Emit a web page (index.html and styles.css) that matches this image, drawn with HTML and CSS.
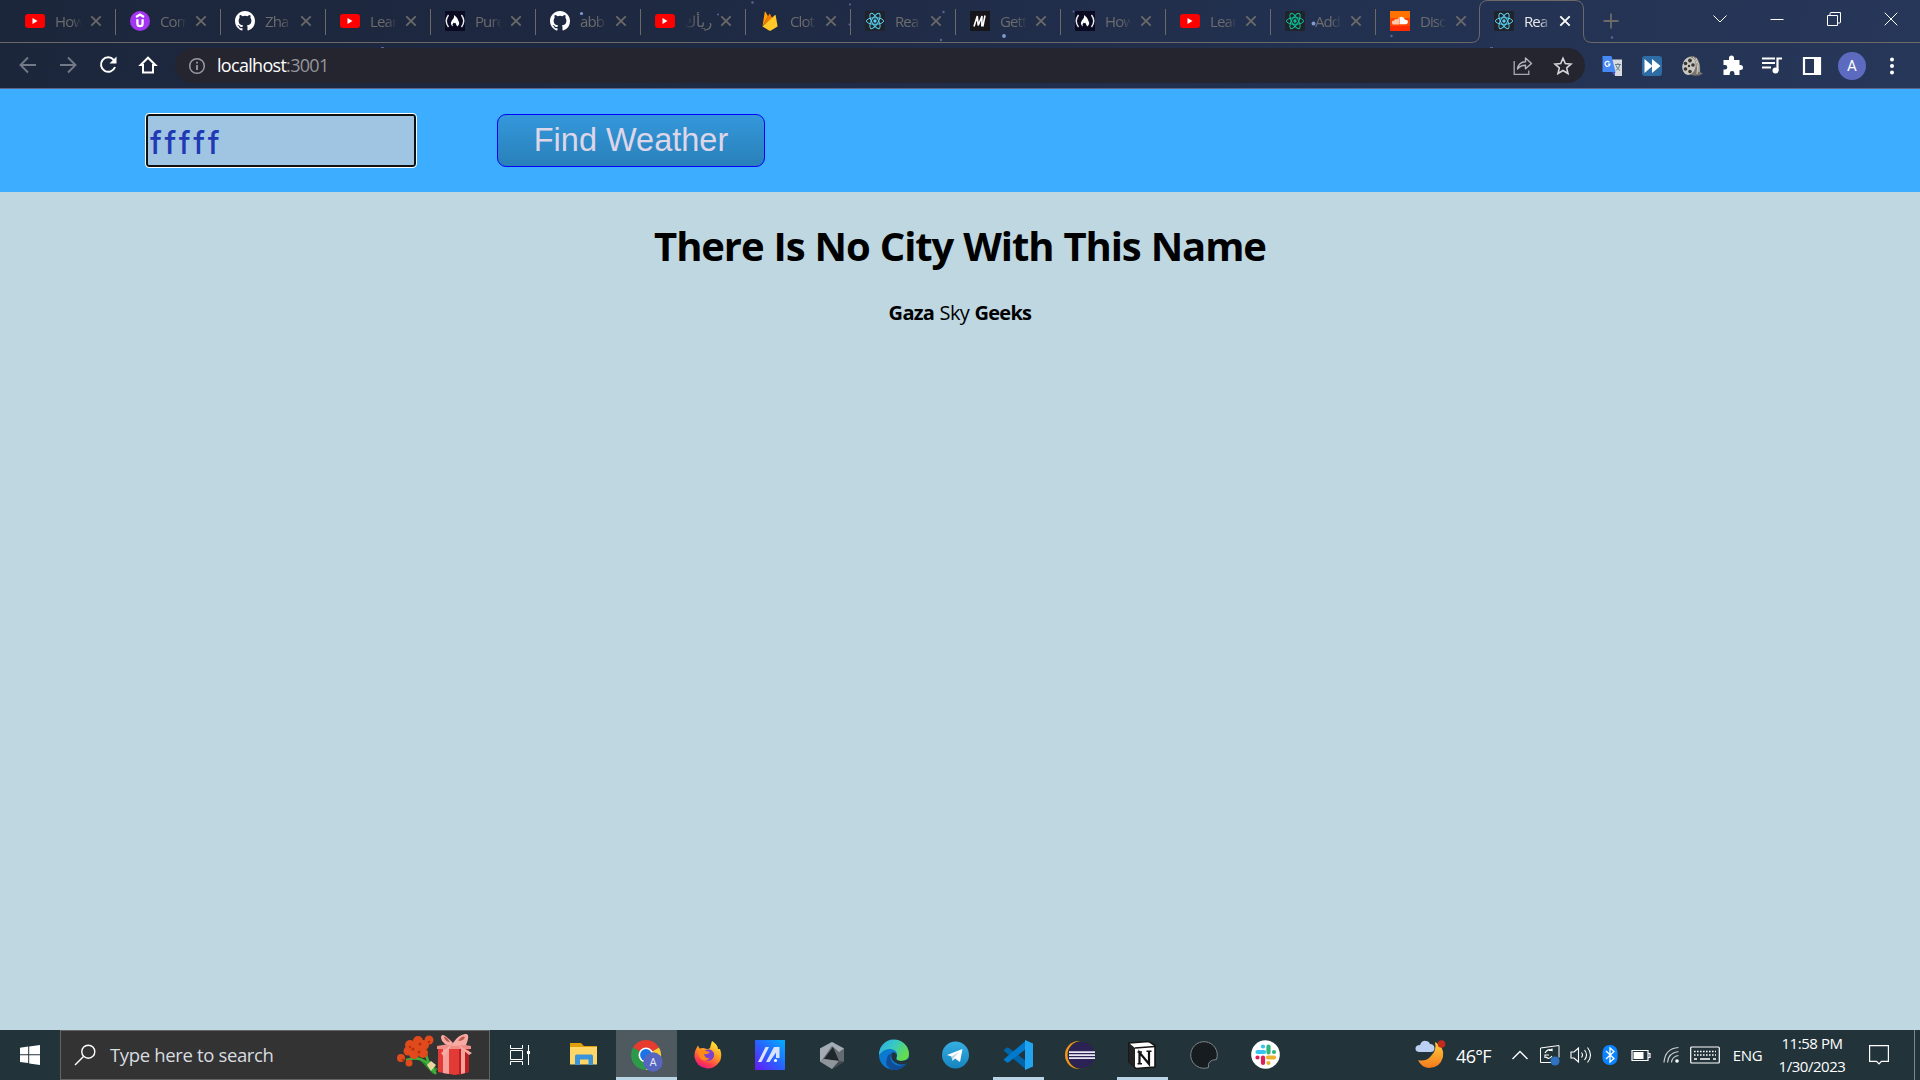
FILE: index.html
```html
<!DOCTYPE html>
<html lang="en">
<head>
<meta charset="utf-8">
<title>React App</title>
<link rel="stylesheet" href="styles.css">
</head>
<body>
<svg class="defs" aria-hidden="true">
  <defs>
    <symbol id="youtube" viewBox="0 0 20 20"><rect y="3" width="20" height="14" rx="3" fill="#f00"/><path d="M7.500 7v6l5-3z" fill="#fff"/></symbol>
    <symbol id="github" viewBox="0 0 16 16"><path fill="#fff" d="M8 0C3.58 0 0 3.58 0 8c0 3.54 2.29 6.53 5.47 7.59.4.07.55-.17.55-.38 0-.19-.01-.82-.01-1.49-2.01.37-2.53-.49-2.69-.94-.09-.23-.48-.94-.82-1.13-.28-.15-.68-.52-.01-.53.63-.01 1.08.58 1.23.82.72 1.21 1.87.87 2.33.66.07-.52.28-.87.51-1.07-1.78-.2-3.64-.89-3.64-3.95 0-.87.31-1.59.82-2.15-.08-.2-.36-1.02.08-2.12 0 0 .67-.21 2.2.82a7.6 7.6 0 0 1 4 0c1.53-1.04 2.2-.82 2.2-.82.44 1.1.16 1.92.08 2.12.51.56.82 1.27.82 2.15 0 3.07-1.87 3.75-3.65 3.95.29.25.54.73.54 1.48 0 1.07-.01 1.93-.01 2.2 0 .21.15.46.55.38A8.01 8.01 0 0 0 16 8c0-4.42-3.58-8-8-8z"/></symbol>
    <symbol id="udemy" viewBox="0 0 20 20"><circle cx="10" cy="10" r="10" fill="#a435f0"/><path d="M6 6l4-2.400L14 6M7.400 8.200v4.300q0 2.700 2.600 2.700t2.600-2.700V8.200" fill="none" stroke="#fff" stroke-width="2.300"/></symbol>
    <symbol id="fcc" viewBox="0 0 20 20"><path fill="#0a0a23" d="M0 0h20v20H0z"/><path d="M3.500 4Q-1 10 3.500 16M16.500 4Q21 10 16.500 16" fill="none" stroke="#eee" stroke-width="1.400"/><path d="M9.300 4q.2 3-2.400 5.500Q4.500 13 7.800 15.500q-1-2.500 1-4 .4 1.400 1.600.3.800 2.200 1.800 3.700 3.200-2.300 1.300-5.500Q12 6 9.300 4z" fill="#fff"/></symbol>
    <symbol id="firebase" viewBox="0 0 20 20"><path d="M2.500 15.500L4.700 1q.3-.9.900 0l2.400 4.300z" fill="#ffa000"/><path d="M2.500 15.500L9.200 3.100q.5-.7.900 0l2 3.900z" fill="#f57c00"/><path d="M2.500 15.500L14.700 4.200q.8-.5 1 .4L17.600 15.500l-6.600 4q-1 .5-2 0z" fill="#ffca28"/></symbol>
    <symbol id="react" viewBox="0 0 20 20"><rect width="20" height="20" rx="1.500" fill="#20232a"/><circle cx="10" cy="10" r="1.700" fill="currentColor"/><g fill="none" stroke="currentColor" stroke-width="1"><ellipse cx="10" cy="10" rx="8.600" ry="3.300"/><ellipse cx="10" cy="10" rx="8.600" ry="3.300" transform="rotate(60 10 10)"/><ellipse cx="10" cy="10" rx="8.600" ry="3.300" transform="rotate(120 10 10)"/></g></symbol>
    <symbol id="mui" viewBox="0 0 20 20"><path fill="#15151a" d="M0 0h20v20H0z"/><path d="M4 15.500L7.300 5l.9 9.500L12 5l-.2 10.500M12.800 15.500L15 4.500" fill="none" stroke="#fff" stroke-width="1.600"/></symbol>
    <symbol id="soundcloud" viewBox="0 0 20 20"><path fill="#ff4500" d="M0 0h20v20H0z"/><path fill="#ff7200" d="M0 0h20v7H0z"/><path fill="#ff2a00" d="M0 15h20v5H0z"/><path d="M2 12.500v-2l1-1 1 .5 1-2 2 .5 2-2v7H3z" fill="#ffc9aa"/><path d="M9.500 6.200q4-1.500 5.500 2.500 3-.2 3 2.300-.2 2.300-2.500 2.300h-6z" fill="#fff"/></symbol>
    <symbol id="x" viewBox="0 0 12 12"><path d="M1.300 1.300l9.400 9.400m0-9.400l-9.400 9.400" fill="none" stroke="currentColor" stroke-width="1.800"/></symbol>
  </defs>
</svg>

<div class="browser">
  <div class="tabstrip">
    <div class="tab"><svg class="favicon"><use href="#youtube"/></svg><span class="title">How</span><svg class="close"><use href="#x"/></svg></div>
    <div class="tab"><svg class="favicon"><use href="#udemy"/></svg><span class="title">Com</span><svg class="close"><use href="#x"/></svg></div>
    <div class="tab"><svg class="favicon"><use href="#github"/></svg><span class="title">Zha</span><svg class="close"><use href="#x"/></svg></div>
    <div class="tab"><svg class="favicon"><use href="#youtube"/></svg><span class="title">Lear</span><svg class="close"><use href="#x"/></svg></div>
    <div class="tab"><svg class="favicon"><use href="#fcc"/></svg><span class="title">Pure</span><svg class="close"><use href="#x"/></svg></div>
    <div class="tab"><svg class="favicon"><use href="#github"/></svg><span class="title">abb</span><svg class="close"><use href="#x"/></svg></div>
    <div class="tab"><svg class="favicon"><use href="#youtube"/></svg><span class="title rtl">ريأك</span><svg class="close"><use href="#x"/></svg></div>
    <div class="tab"><svg class="favicon"><use href="#firebase"/></svg><span class="title">Clot</span><svg class="close"><use href="#x"/></svg></div>
    <div class="tab"><svg class="favicon cyan"><use href="#react"/></svg><span class="title">Rea</span><svg class="close"><use href="#x"/></svg></div>
    <div class="tab"><svg class="favicon"><use href="#mui"/></svg><span class="title">Gett</span><svg class="close"><use href="#x"/></svg></div>
    <div class="tab"><svg class="favicon"><use href="#fcc"/></svg><span class="title">How</span><svg class="close"><use href="#x"/></svg></div>
    <div class="tab"><svg class="favicon"><use href="#youtube"/></svg><span class="title">Lear</span><svg class="close"><use href="#x"/></svg></div>
    <div class="tab"><svg class="favicon green"><use href="#react"/></svg><span class="title">Add</span><svg class="close"><use href="#x"/></svg></div>
    <div class="tab last"><svg class="favicon"><use href="#soundcloud"/></svg><span class="title">Disc</span><svg class="close"><use href="#x"/></svg></div>
    <div class="tab active"><svg class="favicon cyan"><use href="#react"/></svg><span class="title">Rea</span><svg class="close"><use href="#x"/></svg></div>
    <svg class="new-tab" viewBox="0 0 16 16"><path d="M8 .5v15M.5 8h15" stroke="currentColor" stroke-width="1.800"/></svg>
    <div class="window-controls">
      <svg viewBox="0 0 14 14"><path d="M.5 3.500L7 10l6.500-6.500" fill="none" stroke="#fff"/></svg>
      <svg viewBox="0 0 14 14"><path d="M.5 7.500h13" stroke="#fff"/></svg>
      <svg viewBox="0 0 14 14"><path d="M.5 3.500h10v10H.5zM3 3.500V1.500Q3 .5 4 .5h9.500v9.500q0 1-1 1h-2" fill="none" stroke="#fff"/></svg>
      <svg viewBox="0 0 14 14"><path d="M.7.7l12.600 12.600M13.300.7L.7 13.300" stroke="#fff"/></svg>
    </div>
    <svg class="outline" viewBox="0 0 1920 89">
      <path d="M0 42.500H1471q8.500 0 8.500-8.500V9q0-8.500 8.500-8.500H1575q8.500 0 8.500 8.500v25q0 8.500 8.500 8.500H1920" fill="none" stroke="#6b6a68"/>
      <g fill="#7f9bd0"><circle cx="581.500" cy="13.500" r="1.600"/><circle cx="1004" cy="36" r="1.900"/><circle cx="1313.500" cy="23.500" r="1.900"/></g>
      <g fill="#53689a"><circle cx="752.500" cy="2.500" r="1.300"/><circle cx="850" cy="4.500" r="1.100"/><circle cx="718" cy="14.500" r="1"/><circle cx="943.500" cy="12" r="1.200"/><circle cx="941" cy="40" r="1.200"/><circle cx="849.500" cy="24.500" r="1.100"/><circle cx="1391.500" cy="36" r="1.200"/><circle cx="1612" cy="37.500" r="1.200"/><circle cx="1073.500" cy="11.500" r="1"/><path d="M381 47h3v1h-3zM1490 47h3v1h-3z"/></g>
    </svg>
  </div>
  <div class="toolbar">
    <div class="nav">
      <svg class="dim" viewBox="0 0 20 20"><path d="M18 10H3M10 2.500L2.500 10l7.500 7.500" fill="none" stroke="currentColor" stroke-width="1.900"/></svg>
      <svg class="dim" viewBox="0 0 20 20"><path d="M2 10h15M10 2.500l7.500 7.500-7.500 7.500" fill="none" stroke="currentColor" stroke-width="1.900"/></svg>
      <svg viewBox="0 0 20 20"><path d="M15.700 4.900A7.200 7.200 0 1 0 17 12" fill="none" stroke="#fff" stroke-width="2"/><path d="M18.500 1.500v7h-7z" fill="#fff"/></svg>
      <svg viewBox="0 0 20 20"><path d="M5 17.600V10H2.600L10 2.700l7.400 7.300H15v7.600z" fill="none" stroke="#fff" stroke-width="2"/></svg>
    </div>
    <div class="omnibox">
      <svg class="info" viewBox="0 0 18 18"><circle cx="9" cy="9" r="7.300" fill="none" stroke="#9a9aa3" stroke-width="1.500"/><path d="M9 8v5M9 4.800v1.800" stroke="#9a9aa3" stroke-width="1.800"/></svg>
      <span class="url">localhost<span class="port">:3001</span></span>
      <svg class="share" viewBox="0 0 20 20"><path d="M1.200 5v13.400h14.600V14.500" fill="none" stroke="#a9a9b0" stroke-width="1.300"/><path d="M4.500 13Q5.500 6 12.500 5.700V2l6 5.500-6 5.300V9.300Q7.500 9.300 4.500 13z" fill="none" stroke="#b5b5bb" stroke-width="1.400" stroke-linejoin="round"/></svg>
      <svg class="star" viewBox="0 0 20 20"><path d="M10 2.300l2.300 5.300 5.700.5-4.300 3.800 1.300 5.600-5-3-5 3 1.300-5.600L2 8.100l5.700-.5z" fill="none" stroke="#d4d4d8" stroke-width="1.600"/></svg>
    </div>
    <div class="extensions">
      <svg viewBox="0 0 22 22"><path d="M11 4.500h10v16.500H14z" fill="#d8dadd"/><path d="M1.500 1h9l4 16h-13z" fill="#4688f4"/><path d="M11 17h3.500L12.800 20.500z" fill="#3a4fc8"/><path d="M8.500 7.300A2.500 2.500 0 1 0 9 9.200H7" fill="none" stroke="#fff" stroke-width="1.200"/><path d="M14 9.500h6M17 8v1.500M19 9.500q-1 4-4 6M15 10.500q1 3 4 5" fill="none" stroke="#607d8b" stroke-width="1"/></svg>
      <svg viewBox="0 0 22 22"><rect x="1" y="1" width="20" height="20" rx="3" fill="#2d6ca5"/><path d="M3.500 4l8 7-8 7zM11 4l8.500 7L11 18z" fill="#fff"/></svg>
      <svg viewBox="0 0 22 22"><path d="M8 1.500Q14-.5 17.500 5q2.500 6 1.500 12l3 1.500q-5 3.500-12 1.500z" fill="#77746e"/><path d="M12 2q6 5 4 17M15 3q4 6 3 14" fill="none" stroke="#d5d2c8" stroke-width="1"/><ellipse cx="8" cy="11" rx="6.600" ry="9" fill="#c9c7c1" transform="rotate(12 8 11)"/><g fill="#37352f"><circle cx="8" cy="11" r="1.200"/><circle cx="9" cy="5.500" r="1.900"/><circle cx="4.500" cy="8.500" r="1.800"/><circle cx="4.500" cy="14" r="1.800"/><circle cx="9" cy="16.500" r="1.800"/><circle cx="12" cy="10" r="1.800"/></g></svg>
      <svg viewBox="0 0 22 22"><path d="M2 6h5.500V4a2.500 2.500 0 0 1 5 0v2H18v5h1a2.500 2.500 0 0 1 0 5h-1v5h-5v-1.500a2.400 2.400 0 0 0-4.800 0V21H2v-5.500h1.500a2.300 2.300 0 0 0 0-4.600H2z" fill="#fff" transform="translate(.5 -1)"/></svg>
      <svg viewBox="0 0 22 22"><path d="M1 3.500h13M1 8h13M1 12.500h9" stroke="#fff" stroke-width="1.900"/><path d="M16.500 16V3.500H21" fill="none" stroke="#fff" stroke-width="2.200"/><circle cx="14.500" cy="15.500" r="3" fill="#fff"/></svg>
      <svg viewBox="0 0 22 22"><path d="M3 3h16v16H3z" fill="none" stroke="#fff" stroke-width="2.200"/><path d="M13 3h6v16h-6z" fill="#fff"/></svg>
      <span class="avatar">A</span>
      <svg viewBox="0 0 22 22"><g fill="#fff"><circle cx="11" cy="4.500" r="2"/><circle cx="11" cy="11" r="2"/><circle cx="11" cy="17.500" r="2"/></g></svg>
    </div>
  </div>
</div>

<main class="app">
  <header class="search-bar">
    <input class="city" type="text" value="fffff" spellcheck="false">
    <button class="find">Find Weather</button>
  </header>
  <h1>There Is No City With This Name</h1>
  <p class="footer"><b>Gaza</b> Sky <b>Geeks</b></p>
</main>

<div class="taskbar">
  <div class="start"><svg width="20" height="20" viewBox="0 0 20 20"><path fill="#fff" d="M0 2.800l8.200-1.200v7.700H0zM9.200 1.400L20 0v9.300H9.200zM0 10.300h8.200v7.800L0 17zM9.200 10.300H20V20L9.200 18.500z"/></svg></div>
  <div class="search">
    <svg class="lens" viewBox="0 0 22 22"><circle cx="14.300" cy="7.700" r="6.500" fill="none" stroke="#fff" stroke-width="1.400"/><path d="M9.500 12.500L1 21" stroke="#fff" stroke-width="1.400"/></svg>
    <span class="placeholder">Type here to search</span>
    <svg class="gift" viewBox="0 0 76 42">
      <path d="M18 20l24 15-5 5z" fill="#2e8b2b"/><path d="M10 26q12-4 20 2l10 12M27 12l5 15 7 11" fill="none" stroke="#3fae3b" stroke-width="2.500"/>
      <path d="M31 31l4-4 5 4-5 6z" fill="#e8d8a0"/>
      <g fill="#e04a1c"><circle cx="22" cy="7" r="5"/><circle cx="14" cy="11" r="5"/><circle cx="28" cy="11" r="5"/><circle cx="21" cy="14" r="5"/><circle cx="12" cy="17" r="4.500"/><circle cx="18" cy="20" r="5"/><circle cx="27" cy="19" r="5"/><circle cx="33" cy="6" r="4.500"/><circle cx="5" cy="24" r="4"/><circle cx="13" cy="29" r="3.500"/></g>
      <g fill="#b5300d"><circle cx="24" cy="10" r="1.500"/><circle cx="17" cy="15" r="1.500"/><circle cx="23" cy="18" r="1.500"/><circle cx="33" cy="8" r="1.300"/><circle cx="14" cy="13" r="1.200"/><circle cx="7" cy="26" r="1.300"/></g>
      <path d="M42 13l18-2 13 2v25l-14 3-17-3z" fill="#e33a36"/><path d="M63 12l10 1v25l-10 3z" fill="#b81e22"/><path d="M47 13h6v27l-6-1zM65 12h4v27l-4 1z" fill="#f5a09b"/>
      <path d="M41 12l17-3 17 3v3H41z" fill="#ef8d87"/><path d="M57 9Q45-4 45 4q1 7 12 8l13-1Q75-1 69 0q-7 1-12 9l-9 14-3-4zM59 9l14 12 3-2z" fill="#f7aaa2"/><path d="M48 3q2-1 6 5-5 0-6-5zM62 7q4-6 7-4-1 4-7 4z" fill="#b85a50"/>
    </svg>
  </div>
  <div class="task-view"><svg width="20" height="20" viewBox="0 0 20 20"><path d="M.5 0v3.500h12V0M.5 20v-3.500h12V20M.5 5.500h12v9H.5zM18.500 0v20" fill="none" stroke="#fff"/><path d="M17 6h3v3h-3z" fill="#fff"/></svg></div>
  <div class="apps">
    <div class="app-button"><svg viewBox="0 0 30 30"><path d="M1 3h11l3 3h13v18H1z" fill="#dfa00c"/><path d="M1 7h27v17.500H1z" fill="#ffd768"/><path d="M6 25V16q0-1.500 1.500-1.500h15q1.500 0 1.500 1.500v9h-4.500v-5.500h-8.500V25z" fill="#3a94dc"/></svg></div>
    <div class="app-button current"><svg viewBox="0 0 30 30"><path d="M15 15L2.010 7.500A15 15 0 0 1 28 7.500z" fill="#e63b2e"/><path d="M15 15L28 7.500A15 15 0 0 1 15 30z" fill="#fcc934"/><path d="M15 15v15A15 15 0 0 1 2.010 7.500z" fill="#2d9a4a"/><circle cx="15" cy="15" r="7.500" fill="#fff"/><circle cx="15" cy="15" r="5.900" fill="#1a73e8"/><circle cx="22" cy="22" r="9.700" fill="#5665bd"/><text x="22" y="26" text-anchor="middle" class="badge-letter">A</text></svg></div>
    <div class="app-button"><svg viewBox="0 0 30 30"><defs><linearGradient id="ff" x1=".8" y1="0" x2=".3" y2="1"><stop offset="0" stop-color="#fff23a"/><stop offset=".45" stop-color="#ff9a22"/><stop offset=".8" stop-color="#ff3b4e"/><stop offset="1" stop-color="#e5148c"/></linearGradient></defs><path d="M19 1q6 4 6 8l2 0q3 8-1 13.500Q21 29 14 28.500 3 27 1.500 17 1 11 5 5.500l1.500 3 4-.5Q15 10 17 8q1-4 2-7z" fill="url(#ff)"/><circle cx="15.500" cy="15" r="5.700" fill="#7a42cf"/><path d="M5 11q5-2 8 0l4 1q-2 3-6 2 1 5 6 4-6 5-10 0-2-3-2-7z" fill="#ff8a18"/></svg></div>
    <div class="app-button"><svg viewBox="0 0 30 30"><defs><linearGradient id="ma" x1="0" y1="1" x2="1" y2="0"><stop offset="0" stop-color="#6a18f5"/><stop offset=".5" stop-color="#2863ff"/><stop offset="1" stop-color="#00b0ff"/></linearGradient></defs><path fill="url(#ma)" d="M0 0h30v30H0z"/><path d="M3 22L10.500 7H14L6.500 22zM11 22l8-15h5.500v11H21v-5.500L14.500 22z" fill="#d9e2ff"/><circle cx="20.500" cy="20.500" r="1.600" fill="#fff"/></svg></div>
    <div class="app-button"><svg viewBox="0 0 30 30"><path d="M15 2L27 8.500v13L15 29 3 21.500v-13z" fill="#646c71"/><path d="M15 2L27 8.500l-5 3.500-7-6L5 20l-2 1.500v-13z" fill="#a4adb3"/><path d="M16 7l6 14-15-2z" fill="#20262b"/><path d="M3 21.500L7 19l15 2-7 8z" fill="#8e969b"/><path d="M22 21l5 .5L15 29z" fill="#444b50"/></svg></div>
    <div class="app-button"><svg viewBox="0 0 30 30"><defs><linearGradient id="eg" x1="0" y1="0" x2="1" y2=".5"><stop offset="0" stop-color="#2ba7e8"/><stop offset=".5" stop-color="#38c9c4"/><stop offset="1" stop-color="#65dc4c"/></linearGradient></defs><circle cx="15" cy="15" r="15" fill="#0b79d0"/><path d="M0 15A15 15 0 0 1 30 14q0 7-8 7-6 0-4-4 1-7-6-8Q5 8 0 15z" fill="url(#eg)"/><path d="M12 14q-2 8 5 11 6 2 11-2-5 8-15 7-8-4-5-12 1-4 4-4z" fill="#114c97"/><path d="M12.500 13q2-2 5 1 1 2-.5 4 0 3 6 3 4 0 7-3v3l-1.800 2q-4 2.500-9.200 1-8-3-6.500-11z" fill="#22333b"/></svg></div>
    <div class="app-button"><svg viewBox="0 0 30 30"><defs><linearGradient id="tg" x2="0" y2="1"><stop offset="0" stop-color="#37aee2"/><stop offset="1" stop-color="#1684bf"/></linearGradient></defs><circle cx="14.500" cy="15" r="13.500" fill="url(#tg)"/><path d="M6 15L21.500 9 19 22l-5-3.500-2.500 2.300-1-4.300z" fill="#fff"/><path d="M10.500 16.500L18 12l-5.500 6-1 3z" fill="#bcd9ea"/></svg></div>
    <div class="app-button open"><svg viewBox="0 0 30 30"><path d="M.5 10.500L3 8q1.500-1 3 0l17 13v8.500z" fill="#0065a9"/><path d="M.5 19.500L3 22q1.500 1 3 0L23 9V.5z" fill="#007acc"/><path d="M22 0l8 3.500v23L22 30z" fill="#22a5f1"/></svg></div>
    <div class="app-button"><svg viewBox="0 0 30 30"><circle cx="14" cy="15" r="14" fill="#f7941e"/><circle cx="16.500" cy="15" r="14" fill="#22333a"/><circle cx="16.500" cy="15" r="13" fill="#2c2255"/><path d="M4 12.200h26M4 15.200h26M4 18.200h26" stroke="#e8e6f2" stroke-width="1.700"/></svg></div>
    <div class="app-button open"><svg viewBox="0 0 30 30"><path d="M2 3l20-1.500 6 4V27L9 28.500 2 22z" fill="#fff" stroke="#151515" stroke-width="1.600"/><path d="M2 3l6 5v20l-6-6z" fill="#222"/><path d="M8 8l20-1.500" stroke="#151515" stroke-width="1.600"/><path d="M12.500 23.500V12.500l9.500 11.500V11.500" fill="none" stroke="#111" stroke-width="2.200"/><path d="M10.500 12h4.500M10.500 23.800h4.500M19.500 11.300h5" stroke="#111" stroke-width="1.400"/></svg></div>
    <div class="app-button"><svg viewBox="0 0 30 30"><path d="M27.500 19.500A13.300 13.300 0 1 0 19.500 27.500Q18 20 27.500 19.500z" fill="#171c20" stroke="#7e8588"/></svg></div>
    <div class="app-button"><svg viewBox="0 0 30 30"><circle cx="14.500" cy="14.500" r="14.300" fill="#fff"/><g fill="none" stroke-width="4.200" stroke-linecap="round"><path d="M6.500 12h6.500M12 6.500h0" stroke="#36c5f0"/><path d="M17.500 6.500v6M23 12h0" stroke="#2eb67d"/><path d="M17 17.500h6M17.500 23h0" stroke="#ecb22e"/><path d="M12 17.500v5.500M6.500 17.500h0" stroke="#e01e5a"/></g></svg></div>
  </div>
  <div class="tray">
    <svg width="32" height="30" viewBox="0 0 32 30"><defs><linearGradient id="mo" x2="0" y2="1"><stop offset="0" stop-color="#ffcf3c"/><stop offset="1" stop-color="#f47a1d"/></linearGradient></defs><path d="M20 2q10 5 8 15-3 11-14 11Q6 27 3 20q8 2 13-4 6-6 4-14z" fill="url(#mo)"/><path d="M5 12q-5 0-4.500-4Q1 5 5 5 7 0 11 1q3 0 4 3 4 0 4.500 4 0 4-4 4z" fill="#bcd0f4"/><circle cx="26.500" cy="4" r="3.800" fill="#c42b1c"/></svg>
    <span class="temp">46°F</span>
    <svg width="18" height="20" viewBox="0 0 18 20"><path d="M1.500 14L9 6.500l7.500 7.500" fill="none" stroke="#fff" stroke-width="1.300"/></svg>
    <svg width="22" height="22" viewBox="0 0 22 22"><path d="M1.500 4L20 1.500v12M1.500 4v14.500H13" fill="none" stroke="#fff"/><path d="M6 9q3-5 7-2.500V4.500M13 6.500h-3M6 14v-3h4M7 13q3 3 6-1" fill="none" stroke="#fff" stroke-width="1.200"/><circle cx="16" cy="17" r="4.600" fill="#2f72c0"/></svg>
    <svg width="22" height="20" viewBox="0 0 22 20"><path d="M1 7h3l4.500-4v14L4 13H1zM11.500 7.500q2 2.500 0 5M14.500 5q4 5 0 10M17.500 2.500q6 7.500 0 15" fill="none" stroke="#fff" stroke-width="1.100"/></svg>
    <svg width="16" height="22" viewBox="0 0 16 22"><rect x=".5" y="1" width="15" height="20" rx="7" fill="#0a84ff"/><path d="M4 7l8 7.500-4 3.500V4l4 3.500L4 15" fill="none" stroke="#fff" stroke-width="1.300"/></svg>
    <svg width="20" height="20" viewBox="0 0 20 20"><path d="M1 5.500h16v10H1zM17.500 8.500h1.500v4h-1.500" fill="none" stroke="#fff" stroke-width="1.200"/><path d="M2.500 7h10v7h-10z" fill="#fff"/></svg>
    <svg width="18" height="20" viewBox="0 0 18 20"><path d="M2 17.500Q3 3.500 16.500 2.500M5.500 17.500Q6 8 16.500 6.500M9.500 17.500q.5-6 7-7" fill="none" stroke="#c8cfd2" stroke-width="1.200"/><circle cx="15" cy="16" r="1.800" fill="#fff"/></svg>
    <svg width="30" height="18" viewBox="0 0 30 18"><rect x=".7" y="1" width="28.600" height="16" rx="1" fill="none" stroke="#fff" stroke-width="1.200"/><path d="M4 5.500h22M4 9h22" stroke="#fff" stroke-width="1.400" stroke-dasharray="1.600 1.400"/><path d="M4 13h3M10 13h10M23 13h3" stroke="#fff" stroke-width="1.300"/></svg>
    <span class="lang">ENG</span>
    <span class="clock"><span>11:58 PM</span><span>1/30/2023</span></span>
    <svg width="20" height="22" viewBox="0 0 20 22"><path d="M.6 1.600h18.800v15.800h-7l-2.400 2.500-2.400-2.500H.6z" fill="none" stroke="#fff" stroke-width="1.200"/></svg>
    <span class="peek"></span>
  </div>
</div>
</body>
</html>
```
FILE: styles.css
```css
* { box-sizing: border-box; }
body {
  margin: 0;
  height: 1080px;
  display: flex;
  flex-direction: column;
  overflow: hidden;
  background: #bed7e0;
  font-family: "Open Sans", "Noto Sans", sans-serif;
}
svg { display: block; flex: none; }
.defs { position: absolute; width: 0; height: 0; }

/* browser chrome */
.browser {
  position: relative;
  height: 89px;
  flex: none;
  background: linear-gradient(100deg, #1c263b, #1e2942 35%, #22304f 65%, #273759);
  border-bottom: 1px solid #5f648a;
}
.tabstrip { display: flex; height: 43px; padding-left: 11px; }
.outline { position: absolute; left: 0; top: 0; width: 1920px; height: 89px; pointer-events: none; }
.tab {
  position: relative;
  width: 105px;
  display: flex;
  align-items: center;
  padding: 0 14px 1px;
  flex: none;
  color: #6c6c6c;
}
.tab::after {
  content: "";
  position: absolute;
  right: 0;
  top: 9px;
  width: 1px;
  height: 26px;
  background: #6b6a68;
}
.tab.last::after, .tab.active::after { display: none; }
.tab.active { color: #e8e8ec; padding-left: 13px; }
.favicon { width: 20px; height: 20px; }
.cyan { color: #57cfee; }
.green { color: #0cc195; }
.title {
  width: 28px;
  margin-left: 9px;
  padding-left: 1px;
  overflow: hidden;
  white-space: nowrap;
  font-size: 15px;
  line-height: 22px;
  letter-spacing: -0.9px;
  -webkit-mask-image: linear-gradient(90deg, #000 60%, transparent);
  mask-image: linear-gradient(90deg, #000 60%, transparent);
}
.title.rtl {
  direction: rtl;
  letter-spacing: 0;
  -webkit-mask-image: linear-gradient(270deg, #000 50%, transparent);
  mask-image: linear-gradient(270deg, #000 50%, transparent);
}
.close { width: 12px; height: 12px; margin-left: 8px; color: #6b6a68; }
.active .close { color: #fff; }
.new-tab { width: 16px; height: 16px; margin: 13px 0 0 17px; color: #6b6a68; }
.window-controls { display: flex; align-items: center; gap: 43px; margin-left: 94px; height: 37px; }
.window-controls svg { width: 14px; height: 14px; }

.toolbar { display: flex; align-items: center; height: 45px; }
.nav { display: flex; gap: 20px; padding: 0 0 1px 17.500px; width: 175px; }
.nav svg { width: 20px; height: 20px; }
.dim { color: #737986; }
.omnibox {
  display: flex;
  align-items: center;
  width: 1410px;
  height: 35px;
  border-radius: 18px;
  background: #25252f;
  padding: 0 12px 0 13px;
}
.info { width: 18px; height: 18px; }
.url { flex: 1; margin-left: 11px; padding-bottom: 1px; font-size: 18px; letter-spacing: -0.7px; color: #fff; }
.port { color: #96969c; }
.share, .star { width: 20px; height: 20px; }
.star { margin-left: 20px; }
.extensions { display: flex; align-items: center; padding-left: 16px; gap: 18px; }
.extensions svg { width: 22px; height: 22px; }
.avatar {
  width: 28px;
  height: 28px;
  margin: 0 -3px;
  border-radius: 50%;
  background: #5c6bc0;
  color: #fff;
  font: 15px/28px Roboto, sans-serif;
  text-align: center;
}

/* weather page */
.app { flex: 1; text-align: center; }
.search-bar {
  display: flex;
  align-items: center;
  height: 103px;
  gap: 81px;
  padding-left: 146px;
  background: #3daeff;
}
.city {
  width: 270px;
  height: 53px;
  padding: 3px 2px 0;
  border: 2px solid #101010;
  border-radius: 3px;
  outline: 1px solid #fff;
  background: #9fc5e3;
  color: #2039b4;
  font: 500 31px Inter, sans-serif;
  letter-spacing: 3.900px;
}
.find {
  width: 268px;
  height: 53px;
  padding: 0 0 1px;
  border: 1px solid #00f;
  border-radius: 9px;
  background: linear-gradient(#3498db, #2980b9);
  color: #dcd6e8;
  font: 32.500px "Liberation Sans", Arial, sans-serif;
}
h1 { margin: 27px 0; font-size: 40px; line-height: 54px; letter-spacing: -1.1px; word-spacing: 0.8px; }
.footer { margin: 0; font-size: 20px; line-height: 26px; letter-spacing: -0.7px; word-spacing: 0.9px; }

/* taskbar */
.taskbar { display: flex; height: 50px; flex: none; background: #22333a; color: #fff; }
.start { width: 60px; display: flex; align-items: center; justify-content: center; }
.search {
  display: flex;
  align-items: center;
  width: 430px;
  background: #333;
  border: 1px solid #646464;
  padding: 0 17px 0 13px;
}
.lens { width: 22px; height: 22px; }
.placeholder { flex: 1; margin-left: 14px; padding-bottom: 1px; font-size: 18.500px; letter-spacing: -0.350px; color: #d8dce0; }
.gift { width: 76px; height: 42px; }
.task-view { width: 63px; display: flex; align-items: center; padding-left: 20px; }
.apps { display: flex; }
.app-button {
  width: 62px;
  padding-top: 10px;
  display: flex;
  flex-direction: column;
  align-items: center;
  justify-content: space-between;
}
.app-button svg { width: 30px; height: 30px; overflow: visible; }
.current { width: 61px; margin-left: 1px; background: #4e5a60; }
.current svg { margin-right: 1px; }
.current::after, .open::after { content: ""; width: 51px; height: 3px; background: #b9d5e5; }
.current::after { width: 61px; }
.badge-letter { font: 11px Roboto, sans-serif; fill: #e6e8f6; }
.tray {
  margin-left: auto;
  display: grid;
  grid-template-columns: 38px 56px 28px 32px 30px 28px 33px 27px 42px 43px 86px 48px 17px;
  align-items: center;
  justify-items: center;
}
.temp { font-size: 18px; letter-spacing: -0.7px; padding: 1px 9px 0 0; }
.lang { font-size: 15px; letter-spacing: -0.4px; }
.clock { display: flex; flex-direction: column; align-items: center; font-size: 15px; line-height: 23px; letter-spacing: -0.450px; white-space: nowrap; }
.peek { width: 1px; height: 50px; background: #7c878c; justify-self: end; margin-right: 5px; }
```
